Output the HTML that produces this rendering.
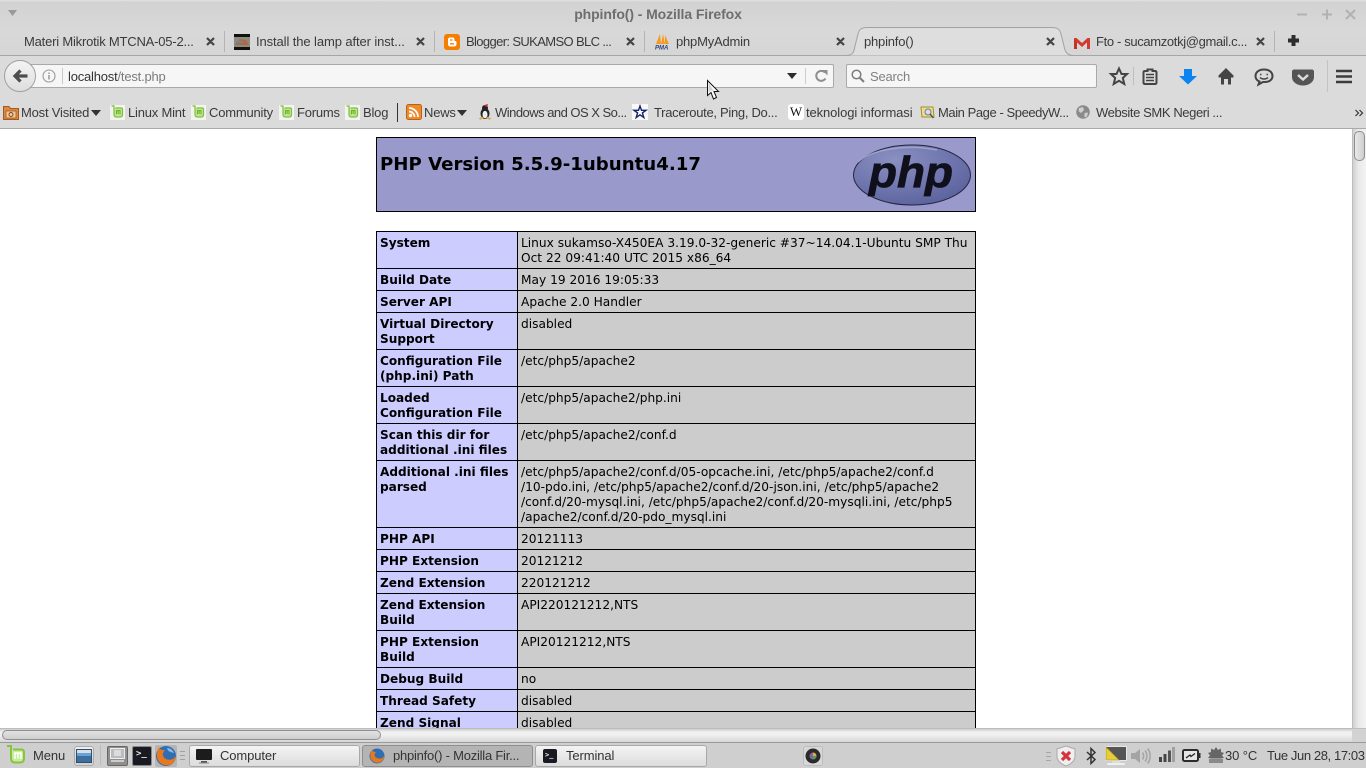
<!DOCTYPE html>
<html><head><meta charset="utf-8"><title>phpinfo()</title>
<style>
*{box-sizing:border-box}
html,body{margin:0;padding:0;width:1366px;height:768px;overflow:hidden;background:#fff}
.t{position:absolute;white-space:nowrap;font:13px/16px "Liberation Sans",sans-serif;color:#3a3a3a;letter-spacing:-.2px}
.a{position:absolute}
svg{position:absolute;overflow:visible}
#page{position:absolute;left:0;top:129px;width:1352px;height:599px;background:#fff;overflow:hidden;font-family:"DejaVu Sans",sans-serif;color:#000}
#head{position:absolute;left:376px;top:8px;width:600px;height:75px;background:#9999cc;border:1px solid #000}
#head h1{position:absolute;left:3px;top:16px;margin:0;font:bold 18.15px/22px "DejaVu Sans",sans-serif;white-space:nowrap}
table{position:absolute;left:376px;top:102px;width:600px;border-collapse:collapse;table-layout:fixed;font:12.1px/15px "DejaVu Sans",sans-serif}
td{border:1px solid #000;vertical-align:top;padding:4px 3px 2px 3px;background:#ccc;word-break:normal}
td.e{background:#ccccff;font-weight:bold;width:141px}
td.v{padding-left:3px;font-size:12.2px}
</style></head><body>

<!-- window chrome -->
<div class="a" style="left:0;top:0;width:1366px;height:55px;background:linear-gradient(#e4e4e4 0,#d2d2d2 2px,#d8d8d8 30px,#d6d6d6 100%)"></div>
<div class="a" style="left:0;top:55px;width:1366px;height:74px;background:#dbdbdb"></div>
<div class="a" style="left:0;top:55px;width:1366px;height:1px;background:#a6a6a6"></div>
<div class="a" style="left:0;top:128px;width:1366px;height:1px;background:#a9a9a9"></div>
<svg style="left:8px;top:10px" width="10" height="7"><path d="M0 0H9L4.500 6Z" fill="#9a9a9a"/></svg>
<div class="t" style="left:0;top:6px;width:1316px;text-align:center;font:bold 14px/17px 'Liberation Sans',sans-serif;color:#6e6e6e;letter-spacing:-.1px">phpinfo() - Mozilla Firefox</div>
<svg style="left:1296px;top:8px" width="62" height="14"><g stroke="#b2b2b2" stroke-width="2" fill="none"><path d="M1 6.500H11"/><path d="M26 6.500H36M31 1.500V11.500"/><path d="M50 2L59 11M59 2L50 11"/></g></svg>

<!-- tabs -->
<svg style="left:0;top:25px" width="1366" height="32">
 <path d="M846 30.500C853 30.500 854 27 855 21L858 9C859 4 862 2.500 867 2.500H1052C1057 2.500 1060 4 1061 9L1064 21C1065 27 1067 30.500 1074 30.500" fill="#dedede" stroke="#a3a3a3"/>
 <g stroke="#444" stroke-width="2.200" fill="none" transform="translate(0,1)">
  <path d="M207 12L214 19M214 12L207 19M417 12L424 19M424 12L417 19M627 12L634 19M634 12L627 19M837 12L844 19M844 12L837 19M1047 12L1054 19M1054 12L1047 19M1257 12L1264 19M1264 12L1257 19"/>
 </g>
 <path d="M224.500 6V27M434.500 6V27M644.500 6V27M1274.500 6V27" stroke="#b4b4b4"/>
 <path d="M1288 13.500h3.500V10h4v3.500h3.500v4h-3.500V21h-4v-3.500H1288Z" fill="#2d2d2d"/>
</svg>
<div class="t" style="left:24px;top:34px">Materi Mikrotik MTCNA-05-2...</div>
<div class="t" style="left:256px;top:34px;letter-spacing:-.1px">Install the lamp after inst...</div>
<div class="t" style="left:466px;top:34px;letter-spacing:-.63px">Blogger: SUKAMSO BLC ...</div>
<div class="t" style="left:676px;top:34px">phpMyAdmin</div>
<div class="t" style="left:864px;top:34px">phpinfo()</div>
<div class="t" style="left:1096px;top:34px;letter-spacing:-.35px">Fto - sucamzotkj@gmail.c...</div>
<!-- tab favicons -->
<svg style="left:234px;top:34px" width="16" height="16"><rect width="16" height="16" fill="#111"/><rect y="3" width="16" height="10" fill="#8d8a7e"/><path d="M1 11L6 5L12 6L15 11Z" fill="#b5683f"/><path d="M2 7H9V9H2Z" fill="#5f8ea6"/></svg>
<svg style="left:444px;top:34px" width="16" height="16"><rect width="16" height="16" rx="3" fill="#f57d00"/><path d="M4 5.500C4 4 5 3.500 6 3.500H8.500C10 3.500 10.500 4.500 10.500 6V7H11.500C12 7 12.500 7.500 12.500 8.500V10C12.500 11.500 11.500 12.500 10 12.500H6C5 12.500 4 11.500 4 10Z" fill="#fff"/><path d="M6 6H8.500M6 9.800H10" stroke="#f57d00" stroke-width="1.300"/></svg>
<svg style="left:654px;top:33px" width="17" height="17"><path d="M2 11L6 1L7 11ZM7 11L9 1L11 11ZM11 11L11 2L15 11Z" fill="#f49b1d"/><text x="1" y="16.500" font-family="Liberation Sans,sans-serif" font-size="6" font-weight="bold" font-style="italic" fill="#2a3f7c">PMA</text></svg>
<svg style="left:1074px;top:37px" width="16" height="12"><path d="M0 1H2.500L8 6L13.500 1H16V12H13V5.500L8 10L3 5.500V12H0Z" fill="#d23a2e"/><path d="M3 5.500V12H0V2Z" fill="#c43226"/></svg>

<!-- nav bar -->
<div class="a" style="left:18px;top:64px;width:816px;height:24px;background:#f6f6f6;border:1px solid #a9a9a9;border-radius:2px"></div>
<div class="a" style="left:4px;top:60px;width:32px;height:32px;border-radius:50%;background:linear-gradient(#f4f4f4,#dedede);border:1px solid #a0a0a0"></div>
<svg style="left:12px;top:68px" width="17" height="16"><path d="M8.500 2.500L3 8L8.500 13.500M3.500 8H15.500" fill="none" stroke="#4e4e4e" stroke-width="3.200"/></svg>
<svg style="left:42px;top:69px" width="14" height="14"><circle cx="7" cy="7" r="6" fill="none" stroke="#9a9a9a" stroke-width="1.100"/><path d="M7 6V10.500M7 3.500V5" stroke="#8a8a8a" stroke-width="1.300"/></svg>
<div class="a" style="left:62px;top:68px;width:1px;height:16px;background:#c8c8c8"></div>
<div class="t" style="left:68px;top:69px;color:#333">localhost<span style="color:#7b7b7b">/test.php</span></div>
<svg style="left:787px;top:73px" width="10" height="6"><path d="M0 0H10L5 6Z" fill="#2c2c2c"/></svg>
<div class="a" style="left:805px;top:68px;width:1px;height:16px;background:#cdcdcd"></div>
<svg style="left:815px;top:69px" width="13" height="14"><path d="M10.500 9.500A5 5 0 1 1 10 3.500" fill="none" stroke="#8f8f8f" stroke-width="2"/><path d="M7 1H12.500V6.500Z" fill="#8f8f8f"/></svg>
<div class="a" style="left:846px;top:64px;width:251px;height:24px;background:#f6f6f6;border:1px solid #a9a9a9;border-radius:2px"></div>
<svg style="left:851px;top:69px" width="14" height="14"><circle cx="5.500" cy="5.500" r="4.300" fill="none" stroke="#7d7d7d" stroke-width="1.500"/><path d="M8.500 8.500L13 13" stroke="#7d7d7d" stroke-width="2"/></svg>
<div class="t" style="left:870px;top:69px;color:#808080">Search</div>
<!-- nav icons -->
<svg style="left:1105px;top:60px" width="250" height="32">
 <path d="M14 8.500L16.500 14H22L17.800 18L19.300 24L14 20.800L8.700 24L10.200 18L6 14H11.500Z" fill="none" stroke="#444" stroke-width="2"/>
 <path d="M28.500 7V25" stroke="#bdbdbd"/>
 <path d="M40 11H42.500V9.500H47.500V11H50C51 11 51.500 11.500 51.500 12.500V22.500C51.500 23.500 51 24 50 24H40C39 24 38.500 23.500 38.500 22.500V12.500C38.500 11.500 39 11 40 11Z" fill="none" stroke="#444" stroke-width="2"/>
 <path d="M41 14.500H49M41 17.500H49M41 20.500H49" stroke="#444" stroke-width="1.500"/>
 <path d="M79 9H87V16H92L83 24.500L74 16H79Z" fill="#0a84f0"/>
 <path d="M121 8L128.500 15.500V17.500H126V24.500H123V19H119V24.500H116V17.500H113.500V15.500Z" fill="#444"/>
 <path d="M159 9.500C164.500 9.500 167.500 12.500 167.500 16C167.500 19.500 164.500 22 160 22H158L153.500 24.500L154.500 21.500C152 20.500 150.500 18.500 150.500 16C150.500 12.500 153.500 9.500 159 9.500Z" fill="none" stroke="#444" stroke-width="2"/>
 <path d="M155 14.500H156.500M161.500 14.500H163M155 17.500C157 19.500 161 19.500 163 17.500" stroke="#444" stroke-width="1.500" fill="none"/>
 <path d="M189 9.500H207C208 9.500 209 10.500 209 11.500V17C209 22 204 25.500 198 25.500C192 25.500 187 22 187 17V11.500C187 10.500 188 9.500 189 9.500Z" fill="#555"/>
 <path d="M193 15L198 19.500L203 15" fill="none" stroke="#ddd" stroke-width="2.400"/>
 <path d="M222.500 0V32" stroke="#c4c4c4"/>
 <path d="M231 11H247M231 16.500H247M231 22H247" stroke="#3c3c3c" stroke-width="2.400"/>
</svg>
<!-- mouse cursor -->
<svg style="left:707px;top:80px;z-index:5" width="14" height="21"><path d="M.5 .5V15.500L4 12.500L6.500 19L9.500 17.500L7 11.500H11.500Z" fill="#fff" stroke="#111"/><path d="M1.500 2.500V12.500L4 10.500L7 11L5 8Z" fill="#222" opacity=".2"/></svg>

<!-- bookmarks -->
<svg style="left:3px;top:105px" width="16" height="15"><path d="M.5 1.500H6L7.500 3.500H15.500V14.500H.5Z" fill="#d98b45" stroke="#a55a1c"/><rect x="3" y="6" width="10" height="7" fill="#f0c9a0" stroke="#a55a1c" stroke-width=".8"/><circle cx="8" cy="9.500" r="2" fill="none" stroke="#8a4a14"/></svg>
<div class="t" style="left:21px;top:105px">Most Visited</div>
<svg style="left:91px;top:110px" width="10" height="6"><path d="M0 0H10L5 6Z" fill="#333"/></svg>
<svg width="0" height="0"><defs><g id="mint"><rect width="15" height="15" fill="#f3f3f0"/><path d="M1.500 1H4V9.500C4 11 5 12 6.500 12H10C11.500 12 12.500 11 12.500 9.500V4.500C12.500 3.500 12 3 11 3H5.500" fill="#c3e69a" stroke="#7fbf3a" stroke-width="1.200"/><path d="M6.500 9.500V5.500H10V9.500M8.200 5.500V9" fill="none" stroke="#6cb32a" stroke-width="1.100"/></g></defs></svg>
<svg style="left:110px;top:105px" width="15" height="15"><use href="#mint"/></svg>
<div class="t" style="left:128px;top:105px">Linux Mint</div>
<svg style="left:191px;top:105px" width="15" height="15"><use href="#mint"/></svg>
<div class="t" style="left:209px;top:105px">Community</div>
<svg style="left:279px;top:105px" width="15" height="15"><use href="#mint"/></svg>
<div class="t" style="left:297px;top:105px">Forums</div>
<svg style="left:345px;top:105px" width="15" height="15"><use href="#mint"/></svg>
<div class="t" style="left:363px;top:105px">Blog</div>
<div class="a" style="left:397px;top:103px;width:1px;height:19px;background:#333"></div>
<svg style="left:406px;top:104px" width="16" height="16"><rect x=".5" y=".5" width="15" height="15" rx="2" fill="#ee8a2c" stroke="#b96210"/><circle cx="4.500" cy="11.500" r="1.700" fill="#fff"/><path d="M3 7.500A5.500 5.500 0 0 1 8.500 13M3 4A9 9 0 0 1 12 13" fill="none" stroke="#fff" stroke-width="1.700"/></svg>
<div class="t" style="left:424px;top:105px">News</div>
<svg style="left:457px;top:110px" width="10" height="6"><path d="M0 0H10L5 6Z" fill="#333"/></svg>
<svg style="left:478px;top:104px" width="14" height="16"><ellipse cx="7" cy="9.500" rx="4.500" ry="5.500" fill="#222"/><ellipse cx="7" cy="10.500" rx="2.500" ry="3.800" fill="#eee"/><circle cx="7" cy="4" r="3" fill="#222"/><path d="M5 1.500L10 0L9 3Z" fill="#c23"/><path d="M1.500 15L5 13.500M12.500 15L9 13.500" stroke="#d9a441" stroke-width="2"/></svg>
<div class="t" style="left:495px;top:105px;letter-spacing:-.52px">Windows and OS X So...</div>
<svg style="left:632px;top:104px" width="16" height="16"><rect width="16" height="16" fill="#f8f8f8"/><path d="M8 2L9.500 6.300H14L10.400 8.900L11.800 13.500L8 10.800L4.200 13.500L5.600 8.900L2 6.300H6.500Z" fill="#fff" stroke="#12236e" stroke-width="1.400"/></svg>
<div class="t" style="left:654px;top:105px;letter-spacing:-.3px">Traceroute, Ping, Do...</div>
<div class="a" style="left:788px;top:104px;width:16px;height:16px;background:#fff;border-radius:3px;font:13px/16px 'Liberation Serif',serif;text-align:center;color:#111">W</div>
<div class="t" style="left:806px;top:105px;letter-spacing:-.1px">teknologi informasi</div>
<svg style="left:920px;top:104px" width="15" height="15"><path d="M1 3H13L14 13H2Z" fill="#f1dc8e" stroke="#a58c2f"/><circle cx="8" cy="8" r="3" fill="#cfe0ee" stroke="#6a7d8c"/><path d="M10 10L13.500 14" stroke="#555" stroke-width="1.500"/></svg>
<div class="t" style="left:938px;top:105px;letter-spacing:-.43px">Main Page - SpeedyW...</div>
<svg style="left:1076px;top:105px" width="14" height="14"><circle cx="7" cy="7" r="6.800" fill="#8a8a8a"/><path d="M3 3L7 2L8 5L5 8L2.500 6ZM8.500 8L12 7.500L11 11.500L8.500 12.500Z" fill="#cfcfcf"/></svg>
<div class="t" style="left:1096px;top:105px;letter-spacing:-.4px">Website SMK Negeri ...</div>
<svg style="left:1355px;top:109px" width="9" height="8"><path d="M.5 1L3.500 4L.5 7M4.500 1L7.500 4L4.500 7" fill="none" stroke="#333" stroke-width="1.200"/></svg>

<!-- page -->
<div id="page">
 <div id="head"><h1>PHP Version 5.5.9-1ubuntu4.17</h1>
  <svg style="left:475px;top:6px" width="120" height="62" viewBox="0 0 120 62">
   <defs><radialGradient id="g" cx=".35" cy=".25" r=".9"><stop offset="0" stop-color="#8a90c0"/><stop offset=".6" stop-color="#6b72ab"/><stop offset="1" stop-color="#565c96"/></radialGradient></defs>
   <ellipse cx="60" cy="31" rx="58.500" ry="30" fill="url(#g)" stroke="#23253f" stroke-width="1"/>
   <path d="M6 18C20 5 55 0 85 6" fill="none" stroke="#a9adcf" stroke-width="1.500" opacity=".8"/>
   <text x="59" y="43" text-anchor="middle" font-family="Liberation Sans,sans-serif" font-size="44" font-weight="bold" font-style="italic" fill="#10101c" stroke="#10101c" stroke-width=".8" textLength="84" lengthAdjust="spacingAndGlyphs">php</text>
  </svg>
 </div>
 <table>
  <colgroup><col style="width:141px"><col></colgroup>
  <tr style="height:37px"><td class="e">System</td><td class="v" style="white-space:nowrap">Linux sukamso-X450EA 3.19.0-32-generic #37~14.04.1-Ubuntu SMP Thu<br>Oct 22 09:41:40 UTC 2015 x86_64</td></tr>
  <tr style="height:22px"><td class="e">Build Date</td><td class="v">May 19 2016 19:05:33</td></tr>
  <tr style="height:22px"><td class="e">Server API</td><td class="v">Apache 2.0 Handler</td></tr>
  <tr style="height:37px"><td class="e">Virtual Directory Support</td><td class="v">disabled</td></tr>
  <tr style="height:37px"><td class="e">Configuration File (php.ini) Path</td><td class="v">/etc/php5/apache2</td></tr>
  <tr style="height:37px"><td class="e">Loaded Configuration File</td><td class="v">/etc/php5/apache2/php.ini</td></tr>
  <tr style="height:37px"><td class="e">Scan this dir for additional .ini files</td><td class="v">/etc/php5/apache2/conf.d</td></tr>
  <tr style="height:67px"><td class="e">Additional .ini files parsed</td><td class="v" style="white-space:nowrap">/etc/php5/apache2/conf.d/05-opcache.ini, /etc/php5/apache2/conf.d<br>/10-pdo.ini, /etc/php5/apache2/conf.d/20-json.ini, /etc/php5/apache2<br>/conf.d/20-mysql.ini, /etc/php5/apache2/conf.d/20-mysqli.ini, /etc/php5<br>/apache2/conf.d/20-pdo_mysql.ini</td></tr>
  <tr style="height:22px"><td class="e">PHP API</td><td class="v">20121113</td></tr>
  <tr style="height:22px"><td class="e">PHP Extension</td><td class="v">20121212</td></tr>
  <tr style="height:22px"><td class="e">Zend Extension</td><td class="v">220121212</td></tr>
  <tr style="height:37px"><td class="e">Zend Extension Build</td><td class="v">API220121212,NTS</td></tr>
  <tr style="height:37px"><td class="e">PHP Extension Build</td><td class="v">API20121212,NTS</td></tr>
  <tr style="height:22px"><td class="e">Debug Build</td><td class="v">no</td></tr>
  <tr style="height:22px"><td class="e">Thread Safety</td><td class="v">disabled</td></tr>
  <tr style="height:22px"><td class="e">Zend Signal Handling</td><td class="v">disabled</td></tr>
 </table>
</div>

<!-- vertical scrollbar -->
<div class="a" style="left:1352px;top:129px;width:14px;height:599px;background:linear-gradient(90deg,#cfcfcf,#e9e9e9 40%,#f3f3f3);border-left:1px solid #bdbdbd"></div>
<div class="a" style="left:1354px;top:131px;width:11px;height:30px;background:linear-gradient(90deg,#e8e8e8,#cfcfcf);border:1px solid #8f8f8f;border-radius:5px"></div>
<!-- horizontal scrollbar -->
<div class="a" style="left:0;top:728px;width:1366px;height:14px;background:linear-gradient(#cbcbcb,#ededed 20%,#f2f2f2 40%,#d6d6d6);border-top:1px solid #bdbdbd"></div>
<div class="a" style="left:1352px;top:729px;width:14px;height:13px;background:#d2d2d2"></div>
<div class="a" style="left:2px;top:730px;width:379px;height:10px;background:linear-gradient(#e2e2e2,#cfcfcf);border:1px solid #8f8f8f;border-radius:5px"></div>

<!-- panel -->
<div class="a" style="left:0;top:742px;width:1366px;height:26px;background:#cfcfcf;border-top:1px solid #9a9a9a"></div>
<svg style="left:6px;top:745px" width="21" height="21"><path d="M1 1H5V13C5 16 6.500 17.500 9 17.500H14C17 17.500 18 16 18 13V7C18 5.500 17 4.500 15 4.500H7" fill="#c9eb9c" stroke="#86c440" stroke-width="2"/><path d="M9 14V8H15V14M12 8V13.500" fill="none" stroke="#fff" stroke-width="1.500"/></svg>
<div class="t" style="left:33px;top:748px;color:#333;letter-spacing:-.1px">Menu</div>
<div class="a" style="left:74px;top:746px;width:20px;height:20px;border-radius:3px;background:linear-gradient(#eee,#d2d2d2);border:1px solid #aaa"></div>
<svg style="left:76px;top:749px" width="16" height="15"><rect x=".5" y=".5" width="15" height="13" fill="#3c6f9e" stroke="#2e4e6e"/><rect x="1" y="1" width="14" height="3" fill="#d7dfe6"/><rect x="1" y="4" width="14" height="3" fill="#67a2d6"/></svg>
<div class="a" style="left:100px;top:745px;width:1px;height:20px;background:#bbb"></div>
<div class="a" style="left:107px;top:746px;width:21px;height:20px;background:#8f8f8f;border:1px solid #666;border-radius:2px"></div>
<svg style="left:110px;top:748px" width="15" height="15"><rect x=".5" y=".5" width="14" height="10" fill="#bcbcbc" stroke="#eee"/><rect x="4" y="2" width="7" height="6" fill="#d8dde2"/><rect x="1" y="12" width="13" height="2" fill="#ccc"/></svg>
<div class="a" style="left:132px;top:746px;width:20px;height:20px;background:#1a1a22;border:1px solid #888;border-radius:2px"></div>
<div class="t" style="left:136px;top:748px;color:#eee;font:bold 9px/12px 'DejaVu Sans Mono',monospace;letter-spacing:0">&gt;_</div>
<svg style="left:155px;top:745px" width="22" height="22"><rect width="22" height="22" rx="2" fill="#b5b5b5"/><circle cx="11" cy="11" r="10" fill="#2f6db5"/><path d="M4 2C2 6 1 11 3 15C6 21 14 22 18 18C20 16 21 13 21 11C19 14 15 16 11 14C7 12 7 8 10 5C7 5 5 5 4 2Z" fill="#e8781c"/><path d="M12 3C15 3 18 5 19 8C16 7 13 7 12 3Z" fill="#8fb8e6"/></svg>
<svg style="left:180px;top:750px" width="5" height="13"><path d="M0 1.500H5M0 5.500H5M0 9.500H5" stroke="#a0a0a0"/></svg>
<div class="a" style="left:189px;top:745px;width:171px;height:22px;background:linear-gradient(#f4f4f4,#dcdcdc);border:1px solid #a8a8a8;border-radius:3px"></div>
<svg style="left:196px;top:749px" width="16" height="15"><rect x="0" y="0" width="16" height="11" rx="1" fill="#1c1c1c"/><path d="M5 12H11V13.500H5Z" fill="#555"/><rect x="3" y="13.500" width="10" height="1" fill="#888"/></svg>
<div class="t" style="left:220px;top:748px;color:#333;letter-spacing:-.1px">Computer</div>
<div class="a" style="left:362px;top:745px;width:171px;height:22px;background:#b4b4b4;border:1px solid #8e8e8e;border-radius:3px"></div>
<svg style="left:369px;top:748px" width="16" height="16"><circle cx="8" cy="8" r="7.500" fill="#2f6db5"/><path d="M3 1.500C1.500 4 .5 8 2 11C4 15 10 16 13 13C14.500 12 15 10 15 8C14 10 11 11.500 8 10C5 9 5 6 7 4C5 4 3.500 3.500 3 1.500Z" fill="#e8781c"/></svg>
<div class="t" style="left:393px;top:748px;color:#333;letter-spacing:-.23px">phpinfo() - Mozilla Fir...</div>
<div class="a" style="left:535px;top:745px;width:172px;height:22px;background:linear-gradient(#f4f4f4,#dcdcdc);border:1px solid #a8a8a8;border-radius:3px"></div>
<div class="a" style="left:543px;top:749px;width:14px;height:14px;background:#1a1a22;border-radius:2px"></div>
<div class="t" style="left:545px;top:750px;color:#eee;font:bold 7px/11px 'DejaVu Sans Mono',monospace;letter-spacing:0">&gt;_</div>
<div class="t" style="left:566px;top:748px;color:#333;letter-spacing:-.1px">Terminal</div>
<div class="a" style="left:803px;top:746px;width:20px;height:20px;border-radius:3px;background:#d8d8d8;border:1px solid #bdbdbd"></div>
<svg style="left:805px;top:748px" width="16" height="16"><circle cx="8" cy="8" r="7.500" fill="#2a2a2a"/><circle cx="8" cy="8" r="3.500" fill="#8b5ea8"/><path d="M8 4.500A3.500 3.500 0 0 1 11.500 8H8Z" fill="#d9b13a"/><path d="M8 8H11.500A3.500 3.500 0 0 1 8 11.500Z" fill="#4d9e5a"/></svg>
<!-- tray -->
<svg style="left:1046px;top:750px" width="6" height="14">
 <path d="M0 1.500H5M0 5.500H5M0 9.500H5" stroke="#a6a6a6" transform="translate(0,1)"/>
</svg>
<svg style="left:1056px;top:745px" width="20" height="22"><path d="M10 1L19 4V11C19 16 15 19 10 21C5 19 1 16 1 11V4Z" fill="#efefef" stroke="#aaa"/><path d="M6 7L14 15M14 7L6 15" stroke="#d6323a" stroke-width="3.200"/></svg>
<svg style="left:1086px;top:747px" width="11" height="18"><path d="M1 5L9 12.500L5 16.500V1.500L9 5.500L1 13" fill="none" stroke="#333" stroke-width="1.500"/></svg>
<svg style="left:1105px;top:746px" width="22" height="20"><rect x=".5" y=".5" width="21" height="14" fill="#555" stroke="#e8e8e8"/><path d="M1 1V14H14Z" fill="#e6cc3c" stroke="#a88f16" stroke-width=".6"/><rect x="7" y="15" width="8" height="2" fill="#ddd"/><rect x="2" y="17" width="18" height="2" rx="1" fill="#eee"/></svg>
<svg style="left:1131px;top:747px" width="20" height="18"><path d="M0 6H4L9 2V16L4 12H0Z" fill="#a4a4a4"/><path d="M11.500 5.500C13 7.500 13 10.500 11.500 12.500M14 3.500C16.500 6.500 16.500 11.500 14 14.500M16.500 1.500C20 5.500 20 12.500 16.500 16.500" fill="none" stroke="#a4a4a4" stroke-width="1.500"/></svg>
<svg style="left:1159px;top:747px" width="16" height="16"><rect x="0" y="10" width="3" height="5" fill="#444"/><rect x="4.500" y="7" width="3" height="8" fill="#444"/><rect x="9" y="3.500" width="3" height="11.500" fill="#555"/><rect x="13" y="0" width="3" height="15" fill="#a0a0a0"/></svg>
<svg style="left:1182px;top:749px" width="19" height="13"><rect x="1" y="1" width="15" height="11" rx="1.500" fill="#e6e6e6" stroke="#2c2c2c" stroke-width="2"/><rect x="16.500" y="4" width="2" height="5" fill="#2c2c2c"/><path d="M4 9L8 6L9 7.500L13 4.500" fill="none" stroke="#222" stroke-width="1.300"/></svg>
<svg style="left:1208px;top:746px" width="16" height="18"><path d="M8 1L10 4L13 2.500L13 6L16 7L14 9.500L16 12L12.500 12.500H3.500L0 12L2 9.500L0 7L3 6L3 2.500L6 4Z" fill="#666"/><path d="M1 13H15V17H1Z" fill="#8a8a8a"/></svg>
<div class="t" style="left:1225px;top:748px;color:#333;letter-spacing:-.1px">30 °C</div>
<div class="t" style="left:1267px;top:748px;color:#333;letter-spacing:-.4px">Tue Jun 28, 17:03</div>
</body></html>
